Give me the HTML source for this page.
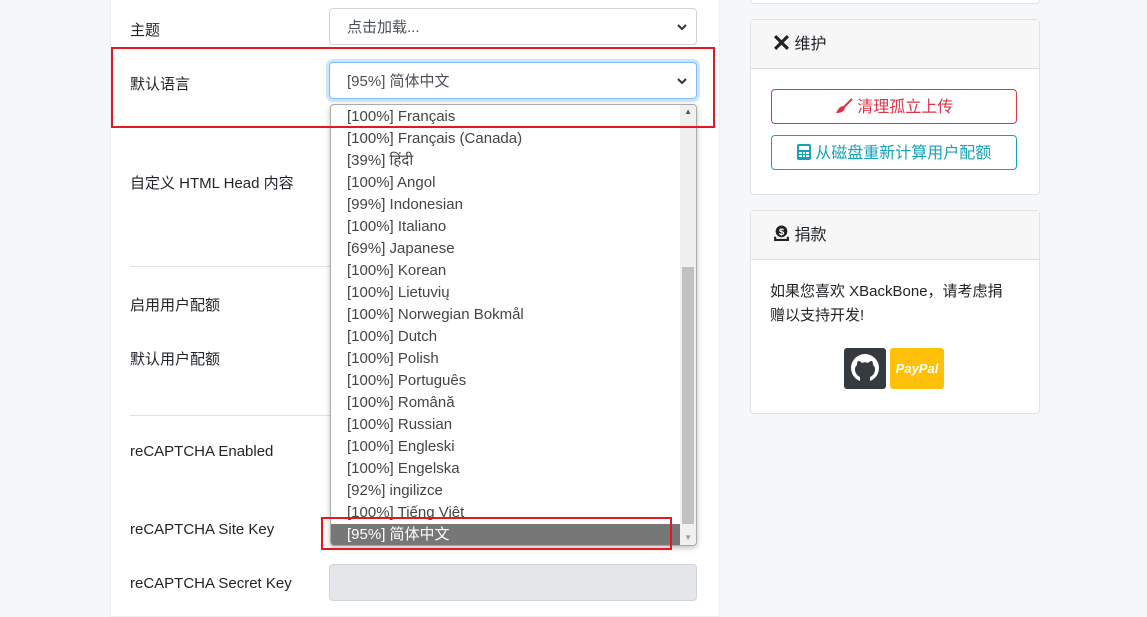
<html><head><style>
body{margin:0;width:1147px;height:611px;background:#f6f7f9;font-family:"Liberation Sans","Noto Sans CJK SC",sans-serif;font-size:15px;color:#212529;position:relative;overflow:hidden}
.a{position:absolute}
.card{position:absolute;background:#fff;border:1px solid #e2e2e2;border-radius:4px}
.lbl{position:absolute;left:130px}
.sel{position:absolute;left:329px;width:368px;height:37px;border:1px solid #ced4da;border-radius:4px;background:#fff;box-sizing:border-box;padding-left:17px;line-height:38px;color:#495057}
.chev{position:absolute;right:9px;top:14px}
.dd{position:absolute;left:330px;top:104px;width:367px;height:442px;background:#fff;border:1px solid #aaa;border-radius:4px;box-sizing:border-box;overflow:hidden;box-shadow:0 2px 6px rgba(0,0,0,.25)}
.dd div.i{height:22px;line-height:22px;padding-left:16px;color:#444}
.hdr{height:48px;background:#f7f7f7;border-bottom:1px solid #ddd;line-height:50px;padding-left:22px;font-size:16px}
.btn{position:absolute;left:20px;width:246px;height:35px;border:1px solid;border-radius:4px;text-align:center;line-height:35px;font-size:16px;box-sizing:border-box}
</style></head><body>
<div class="card" style="left:110px;top:-5px;width:608px;height:620px;border-radius:0;border-color:#eee"></div>
<div class="lbl" style="top:19px">主题</div>
<div class="sel" style="top:8px">点击加载...<svg class="chev" width="10" height="8" viewBox="0 0 10 8"><path d="M1 2l4 4 4-4" fill="none" stroke="#333" stroke-width="2"/></svg></div>
<div class="lbl" style="top:73px">默认语言</div>
<div class="sel" style="top:62px;border-color:#80bdff;box-shadow:0 0 0 3px rgba(0,123,255,.2)">[95%] 简体中文<svg class="chev" width="10" height="8" viewBox="0 0 10 8"><path d="M1 2l4 4 4-4" fill="none" stroke="#333" stroke-width="2"/></svg></div>
<div class="lbl" style="top:172px;line-height:24px;width:165px">自定义 HTML Head 内容</div>
<div class="a" style="left:130px;top:266px;width:200px;height:1px;background:#e2e2e2"></div>
<div class="lbl" style="top:294px">启用用户配额</div>
<div class="lbl" style="top:348px">默认用户配额</div>
<div class="a" style="left:130px;top:415px;width:200px;height:1px;background:#e2e2e2"></div>
<div class="lbl" style="top:443px">reCAPTCHA Enabled</div>
<div class="lbl" style="top:521px">reCAPTCHA Site Key</div>
<div class="lbl" style="top:575px">reCAPTCHA Secret Key</div>
<div class="a" style="left:329px;top:564px;width:368px;height:37px;background:#e4e6e9;border:1px solid #ced4da;border-radius:4px;box-sizing:border-box"></div>
<div class="dd">
<div style="position:absolute;right:0;top:0;width:16px;height:100%;background:#f0f0f0"></div>
<div style="position:absolute;right:2px;top:162px;width:12px;height:257px;background:#c1c1c1"></div>
<div style="position:absolute;right:4px;top:2px;font-size:8px;color:#555">▲</div>
<div style="position:absolute;right:4px;bottom:3px;font-size:8px;color:#999">▼</div>
<div style="margin-top:1px;margin-right:16px">
<div class="i">[100%] Français</div><div class="i">[100%] Français (Canada)</div><div class="i">[39%] हिंदी</div><div class="i">[100%] Angol</div><div class="i">[99%] Indonesian</div><div class="i">[100%] Italiano</div><div class="i">[69%] Japanese</div><div class="i">[100%] Korean</div><div class="i">[100%] Lietuvių</div><div class="i">[100%] Norwegian Bokmål</div><div class="i">[100%] Dutch</div><div class="i">[100%] Polish</div><div class="i">[100%] Português</div><div class="i">[100%] Română</div><div class="i">[100%] Russian</div><div class="i">[100%] Engleski</div><div class="i">[100%] Engelska</div><div class="i">[92%] ingilizce</div><div class="i">[100%] Tiếng Việt</div><div class="i" style="background:#777;color:#fff">[95%] 简体中文</div>
</div></div>
<div class="a" style="left:111px;top:47px;width:604px;height:81px;border:2px solid #e4181f;box-sizing:border-box"></div>
<div class="a" style="left:321px;top:517px;width:351px;height:33px;border:2px solid #e4181f;box-sizing:border-box"></div>
<div class="card" style="left:750px;top:-5px;width:288px;height:7px"></div>
<div class="card" style="left:750px;top:19px;width:288px;height:174px">
<div class="hdr"><svg width="17" height="17" viewBox="0 0 16 16" style="vertical-align:-2px"><path d="M2 2l12 12M14 2L2 14" stroke="#222" stroke-width="3"/></svg> 维护</div>
<div class="btn" style="top:69px;border-color:#dc3545;color:#dc3545"><svg width="18" height="16" viewBox="0 0 18 16" style="vertical-align:-2px"><path d="M17 1L9 9" stroke="#dc3545" stroke-width="2"/><path d="M9 8c-4 0-6 3-8 7 4 0 8-1 9-5z" fill="#dc3545"/></svg> 清理孤立上传</div>
<div class="btn" style="top:115px;border-color:#17a2b8;color:#17a2b8"><svg width="14" height="16" viewBox="0 0 14 16" style="vertical-align:-2px"><rect x="0" y="0" width="14" height="16" rx="2" fill="#17a2b8"/><rect x="2" y="2" width="10" height="4" fill="#fff"/><path d="M2 8h3v2H2zM6 8h2v2H6zM9 8h3v2H9zM2 11h3v2H2zM6 11h2v2H6zM9 11h3v2H9z" fill="#fff"/></svg> 从磁盘重新计算用户配额</div>
</div>
<div class="card" style="left:750px;top:210px;width:288px;height:202px">
<div class="hdr"><svg width="17" height="17" viewBox="0 0 16 16" style="vertical-align:-2px"><circle cx="8" cy="6" r="5.5" fill="#222"/><text x="8" y="9.5" font-size="9" fill="#fff" text-anchor="middle" font-weight="bold">$</text><path d="M1 11v4h14v-4h-2v2H3v-2z" fill="#222"/></svg> 捐款</div>
<div style="padding:20px 19px 0;width:242px;line-height:24px;word-break:break-all">如果您喜欢 XBackBone，请考虑捐赠以支持开发!</div>
<div class="a" style="left:93px;top:137px;width:42px;height:41px;background:#343a40;border-radius:3px"><svg width="42" height="41" viewBox="0 0 42 41"><circle cx="21" cy="20" r="14" fill="#fff"/><path d="M16 34v-5c-2-1-5-3-5-8 0-2 1-3 2-4 0-1 0-3 1-4 2 0 3 1 4 2 2-1 4-1 6 0 1-1 2-2 4-2 1 1 1 3 1 4 1 1 2 2 2 4 0 5-3 7-5 8v5z" fill="#343a40"/></svg></div>
<div class="a" style="left:139px;top:137px;width:54px;height:41px;background:#ffc107;border-radius:3px;color:#fff;text-align:center;line-height:41px;font-size:13px;font-weight:bold;font-style:italic">PayPal</div>
</div>
</body></html>
